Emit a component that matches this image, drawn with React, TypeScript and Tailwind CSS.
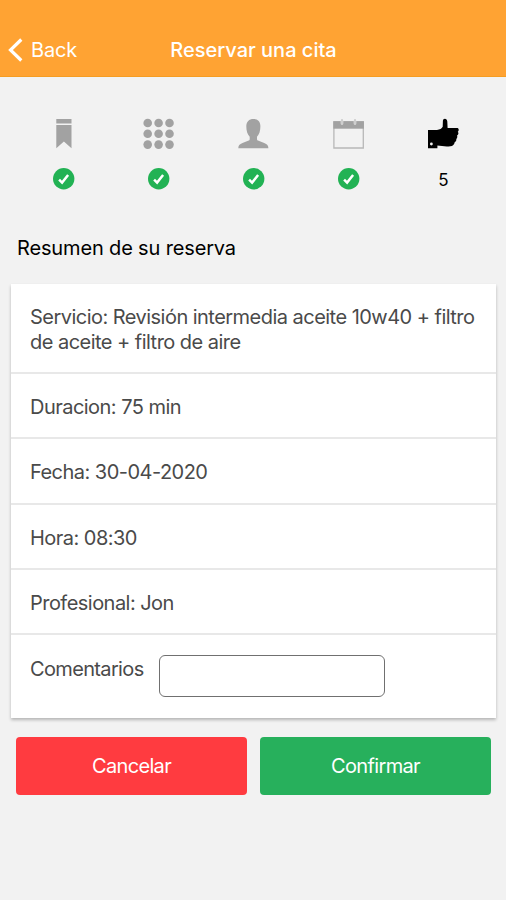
import React from 'react';

const BookmarkIcon: React.FC = () => (
  <svg className="size-[31px]" viewBox="0 0 31 31" fill="#a2a2a2">
    <path d="M8.3 1h15.200v4.600H8.300zM8.300 7h15.200v23.200l-7.600-6.600-7.600 6.600z" />
  </svg>
);

const GridIcon: React.FC = () => (
  <svg className="size-[31px]" viewBox="0 0 31 31" fill="#a2a2a2">
    {[5, 15.8, 26.6].map((y) =>
      [4.7, 15.6, 26.5].map((x) => <circle key={`${x}-${y}`} cx={x} cy={y} r="4.3" />)
    )}
  </svg>
);

const PersonIcon: React.FC = () => (
  <svg className="size-[31px]" viewBox="0 0 31 31" fill="#a2a2a2">
    <path d="M15.400 1c4.300 0 7 2.700 7 7.300 0 4.600-1.200 8.300-3.400 10.500v2.100c0 1 .5 1.500 1.600 1.900l5.600 2.100c3 1.100 4.200 2.600 4.200 5.400H.3c0-2.800 1.200-4.300 4.200-5.400l5.600-2.100c1.100-.4 1.600-.9 1.600-1.900v-2.100C9.500 16.600 8.300 12.900 8.300 8.300c0-4.600 2.800-7.300 7.100-7.300z" />
  </svg>
);

const CalendarIcon: React.FC = () => (
  <svg className="size-[31px]" viewBox="0 0 31 31" fill="none">
    <path d="M.9 4h29.400v26H.9z" stroke="#b8b8b8" strokeWidth="1.300" />
    <path d="M.3 3.200h30.600v7.500H.3z" fill="#a2a2a2" />
    <path d="M9 2.500v3M22 2.500v3" stroke="#e4e4e4" strokeWidth="2.600" strokeLinecap="round" />
    <path d="M9 1.500v4M22 1.500v4" stroke="#b8b8b8" strokeWidth="1" strokeLinecap="round" />
  </svg>
);

const ThumbIcon: React.FC = () => (
  <svg className="size-[31px]" viewBox="0 0 31 31" fill="#000">
    <path
      fillRule="evenodd"
      d="M-.3 12h9.300c2.800-.3 4.700-1.200 5.700-3.200l.2-6c.1-1.400.9-2.100 2-2.100 1.300 0 2.200 1 2.400 2.700l.3 6.600h9.200c1.300 0 1.900.6 1.900 1.700 0 1-.3 1.600-.9 2 .8.700.8 2.100.1 3-.4.500-.5.600-.9.800.6 1.200.3 2.600-.7 3.400.2 1.700-.4 2.700-1.500 3.100-.5 2.700-2 4.100-4.500 4.300-4.500.5-8.800-.1-12.900-.7v2.700H-.3zM3.400 24.600a1.400 1.400 0 1 0 0 2.800 1.400 1.400 0 0 0 0-2.800z"
    />
  </svg>
);

const CheckBadge: React.FC = () => (
  <svg className="size-[22px]" viewBox="0 0 22 22" fill="none">
    <circle cx="10.700" cy="10.800" r="10.700" fill="#22b254" />
    <path d="M6.100 11.600l3 3 6-7.600" stroke="#fff" strokeWidth="2.500" />
  </svg>
);

const App: React.FC = () => {
  const steps = [
    { icon: <BookmarkIcon />, done: true },
    { icon: <GridIcon />, done: true },
    { icon: <PersonIcon />, done: true },
    { icon: <CalendarIcon />, done: true },
    { icon: <ThumbIcon />, done: false }
  ];

  const rows = [
    'Duracion: 75 min',
    'Fecha: 30-04-2020',
    'Hora: 08:30',
    'Profesional: Jon'
  ];

  return (
    <div className="min-h-screen bg-[#f2f2f2] font-['Inter',sans-serif] text-xl">
      <header className="grid h-[77px] grid-cols-[1fr_auto_1fr] items-end border-b border-[#f59d23] bg-[#ffa333] pb-3 text-white">
        <button className="flex items-center gap-2 pl-2">
          <svg className="h-[26px] w-[15px]" viewBox="0 0 15 26" fill="none" stroke="#fff" strokeWidth="3.200">
            <path d="M13.300 2.500L2.500 13l10.800 10.500" />
          </svg>
          <span className="leading-7 tracking-[-0.2px]">Back</span>
        </button>
        <h1 className="pl-px font-medium leading-7">Reservar una cita</h1>
      </header>

      <div className="grid grid-cols-5 pt-[41px] pr-[15px] pl-4">
        {steps.map((step, index) => (
          <div key={index} className="flex flex-col items-center gap-[19px]">
            {step.icon}
            {step.done ? (
              <CheckBadge />
            ) : (
              <span className="text-[17px] leading-6 text-black">{index + 1}</span>
            )}
          </div>
        ))}
      </div>

      <h2 className="mt-[42px] pl-[17px] leading-7 tracking-[-0.15px] text-black">Resumen de su reserva</h2>

      <section className="mt-[22px] mr-[10px] ml-[11px] divide-y-2 divide-[#e8e8e8] bg-white tracking-[-0.53px] text-[#4a4a4a] shadow-[0_2px_3px_rgba(0,0,0,0.25)]">
        <p className="h-[90px] pt-[21px] pr-4 pl-[19px] leading-[25px]">
          Servicio: Revisión intermedia aceite 10w40 + filtro de aceite + filtro de aire
        </p>
        {rows.map((row) => (
          <p key={row} className="flex h-[65.250px] items-center px-[19px] pt-[3px]">
            {row}
          </p>
        ))}
        <div className="flex h-[83px] gap-4 px-[19px] pt-5">
          <label htmlFor="comentarios" className="w-[113px] leading-7 tracking-[-0.65px]">Comentarios</label>
          <input id="comentarios" className="h-[42px] w-[226px] rounded-md border-[1.500px] border-[#707070] bg-white" />
        </div>
      </section>

      <div className="mt-[19px] grid grid-cols-2 gap-[13px] pr-[15px] pl-4 tracking-[-0.65px] text-white">
        <button className="h-[58px] rounded bg-[#ff3b40]">Cancelar</button>
        <button className="h-[58px] rounded bg-[#27b05c]">Confirmar</button>
      </div>
    </div>
  );
};

export default App;
